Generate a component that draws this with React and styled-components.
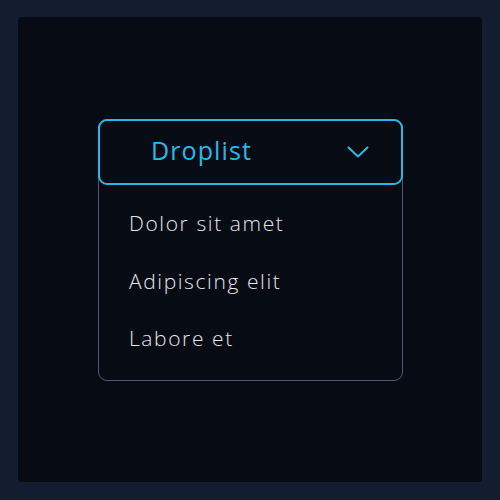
import React, { useState } from "react"
import styled, { createGlobalStyle } from "styled-components"

const GlobalStyle = createGlobalStyle`
  html, body {
    margin: 0;
    padding: 0;
    background: #141d30;
  }
`

const Frame = styled.div`
  width: 500px;
  height: 500px;
  box-sizing: border-box;
  padding: 17px 18px 18px 18px;
`

const Panel = styled.div`
  height: 100%;
  box-sizing: border-box;
  background: #070b14;
  border-radius: 4px;
  padding: 102px 62px 0 80px;
`

const Droplist = styled.div`
  width: 305px;
  box-sizing: border-box;
  border: 1.5px solid #4f586b;
  border-radius: 9px;
  font-family: "Open Sans", "Noto Sans", sans-serif;
`

const Header = styled.button`
  display: flex;
  align-items: center;
  justify-content: space-between;
  width: calc(100% + 2px);
  height: 66px;
  margin: -1.5px -1px 0 -1px;
  box-sizing: border-box;
  padding: 0 32px 3px 51px;
  background: #070b14;
  border: 2px solid #29b7e4;
  border-radius: 9px;
  color: #2bb9e8;
  font-family: inherit;
  font-size: 25px;
  font-weight: 400;
  letter-spacing: 1.1px;
  cursor: pointer;
`

const Chevron = styled.svg`
  width: 22px;
  height: 12px;
  margin-top: 3px;
`

const List = styled.ul`
  list-style: none;
  margin: 0;
  padding: 10px 0 13px 30px;
`

const Item = styled.li`
  height: 57.5px;
  display: flex;
  align-items: center;
  color: #e4e6ea;
  font-size: 21px;
  font-weight: 300;
  letter-spacing: 1.6px;
`

const items = ["Dolor sit amet", "Adipiscing elit", "Labore et"]

const App = () => {
  const [open, setOpen] = useState(true)
  return (
    <Frame>
      <GlobalStyle />
      <Panel>
        <Droplist>
          <Header onClick={() => setOpen(!open)}>
            Droplist
            <Chevron viewBox="0 0 22 12" fill="none">
              <path d="M1.5 1.5 L11 10.5 L20.5 1.5" stroke="#2bb9e8" strokeWidth="2" strokeLinecap="round" strokeLinejoin="round" />
            </Chevron>
          </Header>
          {open && (
            <List>
              {items.map(text => <Item key={text}>{text}</Item>)}
            </List>
          )}
        </Droplist>
      </Panel>
    </Frame>
  )
}

export default App
